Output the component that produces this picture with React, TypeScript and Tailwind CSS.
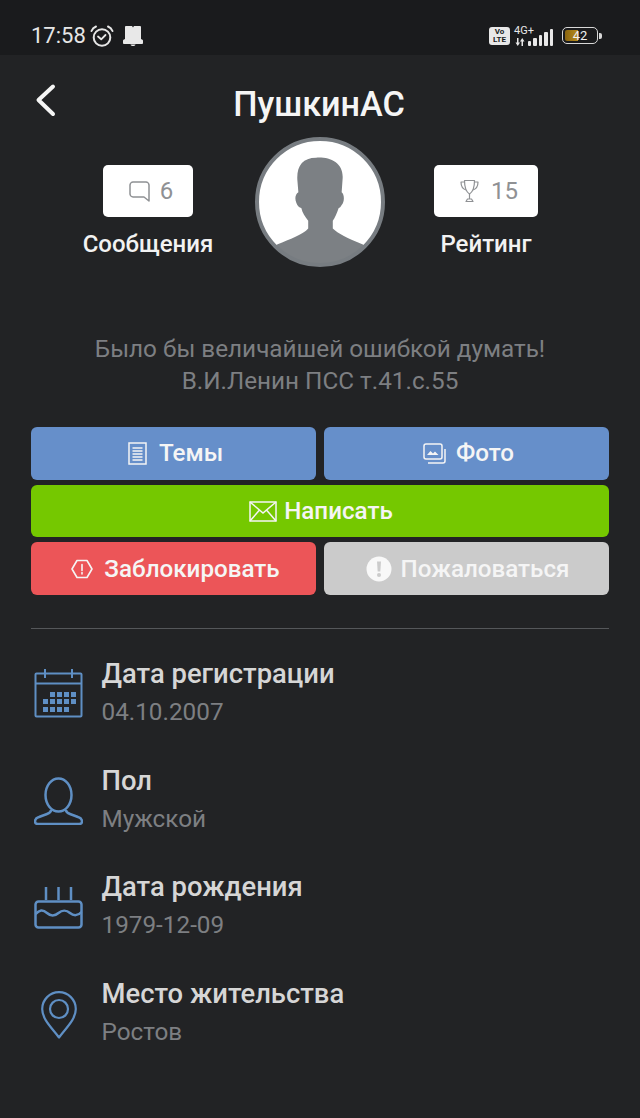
import { ReactNode } from "react"

const font = { fontFamily: "Roboto, sans-serif" }

function Alarm() {
  return (
    <svg width="24" height="22" viewBox="0 0 24 22" fill="none" stroke="#e6e6e6" strokeWidth="2" strokeLinecap="round" strokeLinejoin="round">
      <circle cx="12" cy="12.500" r="8.300" />
      <path d="M8 11.500l3.200 2.800 4.300-4.300" strokeWidth="1.800" />
      <path d="M1.500 6c.8-2 2-3.500 4.500-4.500M22.500 6c-.8-2-2-3.500-4.500-4.500" />
    </svg>
  )
}

function BellOff() {
  return (
    <svg width="20" height="20" viewBox="0 0 20 20" fill="#e8e8e8">
      <path d="M3 0h6l1 1.500L11 0h6c.5 0 1 .5 1 1v12l1.500.800c.3.200.5.500.5.900V17c0 .5-.5 1-1 1H1c-.5 0-1-.5-1-1v-2.300c0-.4.200-.7.500-.9L2 13V1c0-.5.500-1 1-1z" />
      <path d="M7.500 18.500h5c-.3 1-1.300 1.500-2.500 1.500s-2.200-.5-2.500-1.500z" />
    </svg>
  )
}

function Signal() {
  const bars = [5, 8, 11, 14, 17]
  return (
    <div className="flex items-end gap-[2px]">
      {bars.map((h, i) => (
        <div key={i} className="w-[3.500px] bg-[#e8e8e8] rounded-[1px]" style={{ height: h }} />
      ))}
    </div>
  )
}

function StatusBar() {
  return (
    <div className="h-[55px] bg-[#1a1b1d] flex items-center justify-between pl-[31px] pr-[38px] pt-[16px]">
      <div className="flex items-center">
        <span className="text-[22px] leading-[26px] text-[#e6e6e6]">17:58</span>
        <div className="ml-[4px]"><Alarm /></div>
        <div className="ml-[9px]"><BellOff /></div>
      </div>
      <div className="flex items-center">
        <div className="w-[21px] h-[18px] bg-[#e8e8e8] rounded-[3px] flex flex-col items-center justify-center text-[#1a1b1d] text-[8px] leading-[8px] font-bold">
          <span>Vo</span>
          <span>LTE</span>
        </div>
        <div className="ml-[4px] relative w-[39px] h-[20px] flex items-end justify-end">
          <span className="absolute left-0 -top-[1px] text-[11px] leading-[11px] text-[#e8e8e8]">4G+</span>
          <svg className="absolute left-[1px] bottom-0" width="10" height="8" viewBox="0 0 10 8" fill="#e8e8e8">
            <path d="M2 0h1.500v4.500H5L2.750 8 .5 4.500H2zM6.500 8H8V3.500h1.500L7.250 0 5 3.500h1.500z" />
          </svg>
          <Signal />
        </div>
        <div className="ml-[9px] w-[36px] h-[17px] border border-[#d8d8d8] rounded-[5px] p-[2px] relative">
          <div className="w-[13px] h-full bg-gradient-to-r from-[#8a6510] to-[#b98d1c] rounded-l-[2px]" />
          <span className="absolute inset-0 flex items-center justify-center text-[13px] leading-none text-[#f0f0f0]">42</span>
        </div>
        <div className="w-[3px] h-[6px] bg-[#d8d8d8] rounded-r-[2px] ml-[1px]" />
      </div>
    </div>
  )
}

function Avatar() {
  return (
    <svg className="shrink-0" width="130" height="130" viewBox="0 0 130 130">
      <defs>
        <clipPath id="avatar-clip">
          <circle cx="65" cy="65" r="63" />
        </clipPath>
      </defs>
      <circle cx="65" cy="65" r="63" fill="#fff" />
      <g clipPath="url(#avatar-clip)">
        <path
          transform="translate(4 4) scale(.984)"
          fill="#7c8084"
          d="M39 40C38 26 44 17 58 17c14-1 28 5 27 21l-1 14c3 2 3 10 0 13-1 2-2 3-3 3-2 6-4 10-6 13v8c5 5 15 10 30 16l4 2 15 17v10H0v-10l15-17 4-2c12-5 26-10 31-16v-8c-3-4-6-8-7-13-2 0-4-2-5-5-2-5-1-9 2-11z"
        />
      </g>
      <circle cx="65" cy="65" r="63" fill="none" stroke="#777c81" strokeWidth="4" />
    </svg>
  )
}

function Stat({ icon, value, label, box }: { icon: ReactNode; value: string; label: string; box: string }) {
  return (
    <div className="flex flex-col items-center">
      <div className={`${box} h-[52px] bg-white rounded-[5px] flex items-center justify-center text-[#8f9194] text-[24px]`}>
        {icon}
        <span>{value}</span>
      </div>
      <span className="mt-[12px] text-[24px] leading-[30px] font-medium text-[#f2f2f2]">{label}</span>
    </div>
  )
}

function Btn({ bg, icon, text, extra }: { bg: string; icon: ReactNode; text: string; extra: string }) {
  return (
    <div className={`${bg} ${extra} rounded-[6px] flex items-center justify-center text-[24.200px] font-medium text-[#f5f5f5]`}>
      {icon}
      <span>{text}</span>
    </div>
  )
}

function InfoRow({ icon, title, value }: { icon: ReactNode; title: string; value: string }) {
  return (
    <div className="h-[76px] flex items-center">
      <div className="w-[70.500px] pl-[3px] flex justify-start shrink-0">{icon}</div>
      <div className="flex flex-col">
        <span className="text-[27.400px] leading-[38px] font-medium text-[#d6d6d6]">{title}</span>
        <span className="text-[24.300px] leading-[38px] text-[#7d7f82]">{value}</span>
      </div>
    </div>
  )
}

const blue = "#5f8fc4"

const calDots = [
  [16, 23], [23, 23], [30, 23], [37, 23],
  [9, 30], [16, 30], [23, 30], [30, 30], [37, 30],
  [9, 38], [16, 38], [23, 38], [30, 38],
]

export default function App() {
  return (
    <div className="w-[640px] h-[1118px] bg-[#222325] overflow-hidden" style={font}>
      <StatusBar />

      <div className="relative h-[82px] flex items-center justify-center">
        <svg className="absolute left-[33px] top-[27px]" width="26" height="36" viewBox="0 0 26 36" fill="none" stroke="#f5f5f5" strokeWidth="4" strokeLinecap="round" strokeLinejoin="round">
          <path d="M20 4.500 5.500 18 20 32" />
        </svg>
        <span className="text-[34.200px] leading-[40px] font-medium text-[#f5f5f5] mt-[15px] mr-[2px]">ПушкинАС</span>
      </div>

      <div className="flex items-start pl-[83px]">
        <div className="w-[130px] pt-[28px]">
          <Stat
            box="w-[90px] pl-[5px] gap-[9px]"
            value="6"
            label="Сообщения"
            icon={
              <svg width="23" height="23" viewBox="0 0 23 23" fill="none" stroke="#8f9194" strokeWidth="1.500" strokeLinejoin="round">
                <path d="M5 2h13c1.500 0 3 1.500 3 3v16l-5-4H5c-1.500 0-3-1.500-3-3V5c0-1.500 1.500-3 3-3z" />
              </svg>
            }
          />
        </div>
        <div className="ml-[42px]"><Avatar /></div>
        <div className="ml-[49px] w-[104px] pt-[28px]">
          <Stat
            box="w-[104px] pl-[6px] gap-[12px]"
            value="15"
            label="Рейтинг"
            icon={
              <svg width="19" height="24" viewBox="0 0 19 24" fill="none" stroke="#8f9194" strokeWidth="1.200" strokeLinejoin="round">
                <path d="M4.500 1.500h10c0 6-1 11-5 13.500-4-2.500-5-7.500-5-13.500z" />
                <path d="M4.500 3H1c0 4 2 7 5 8M14.500 3H18c0 4-2 7-5 8" />
                <path d="M9.500 15v5M6 22.500h7L11.500 20h-4z" />
              </svg>
            }
          />
        </div>
      </div>

      <div className="mt-[66px] flex flex-col items-center text-[24.300px] leading-[32px] text-[#7d7f82]">
        <span>Было бы величайшей ошибкой думать!</span>
        <span>В.И.Ленин ПСС т.41.с.55</span>
      </div>

      <div className="mx-[31px] mt-[30px] flex flex-col gap-[5px]">
        <div className="grid grid-cols-2 gap-[8px]">
          <Btn
            bg="bg-[#668fca]"
            extra="h-[53px] pl-[4px] gap-[12px]"
            text="Темы"
            icon={
              <svg width="19" height="23" viewBox="0 0 19 23" fill="none" stroke="#f5f5f5" strokeWidth="1.500">
                <rect x="1" y="1" width="17" height="21" />
                <path d="M4.500 6h10M4.500 9h10M4.500 12h10M4.500 15h10M4.500 18h10" />
              </svg>
            }
          />
          <Btn
            bg="bg-[#668fca]"
            extra="h-[53px] pl-[4px] gap-[10px]"
            text="Фото"
            icon={
              <svg width="23" height="21" viewBox="0 0 23 21" fill="none" stroke="#f5f5f5" strokeWidth="1.500">
                <rect x="1" y="1" width="18" height="15" rx="2" />
                <path d="M22 6v12c0 1-1 2-2 2H5" />
                <path d="M4 12l3.500-4 2.500 2.500 2-2 3.500 3.500z" fill="#f5f5f5" stroke="none" />
              </svg>
            }
          />
        </div>
        <Btn
          bg="bg-[#75c800]"
          extra="h-[52px] pl-[2px] pt-[1px] gap-[7px]"
          text="Написать"
          icon={
            <svg width="28" height="21" viewBox="0 0 28 21" fill="none" stroke="#f5f5f5" strokeWidth="1.500">
              <rect x="1" y="1" width="26" height="19" />
              <path d="M1 1l13 11L27 1M1 20l9.500-11M27 20 17.500 9" />
            </svg>
          }
        />
        <div className="grid grid-cols-2 gap-[8px]">
          <Btn
            bg="bg-[#ec5558]"
            extra="h-[53px] pl-[4px] pt-[1px] gap-[11px]"
            text="Заблокировать"
            icon={
              <svg width="22" height="20" viewBox="0 0 22 20" fill="none" stroke="#f5f5f5" strokeWidth="1.600" strokeLinejoin="round">
                <path d="M6 1.500h10L21 10l-5 8.500H6L1 10z" />
                <path d="M11 5.500v6M11 13.500v1.500" strokeLinecap="round" />
              </svg>
            }
          />
          <Btn
            bg="bg-[#cbcbcb]"
            extra="h-[53px] pl-[2px] pt-[1px] gap-[9px]"
            text="Пожаловаться"
            icon={
              <svg width="26" height="26" viewBox="0 0 26 26">
                <circle cx="13" cy="13" r="12.500" fill="#f8f8f8" />
                <path d="M11 5.500h4l-.7 10h-2.600z" fill="#cbcbcb" />
                <circle cx="13" cy="19" r="2" fill="#cbcbcb" />
              </svg>
            }
          />
        </div>
      </div>

      <div className="mx-[31px] mt-[33px] h-px bg-[#55575a]" />

      <div className="mx-[31px] mt-[26px] flex flex-col gap-[30.700px]">
        <InfoRow
          title="Дата регистрации"
          value="04.10.2007"
          icon={
            <svg width="49" height="49" viewBox="0 0 49 49" fill="none" stroke={blue} strokeWidth="2">
              <rect x="1.500" y="4.500" width="46" height="43" rx="1" />
              <path d="M1.500 14.500h46M11 0v9M38 0v9" />
              {calDots.map(([x, y]) => (
                <rect key={`${x}-${y}`} x={x} y={y} width="5" height="5" fill={blue} stroke="none" />
              ))}
            </svg>
          }
        />
        <InfoRow
          title="Пол"
          value="Мужской"
          icon={
            <svg className="mt-[3px]" width="49" height="48" viewBox="0 0 49 48" fill="none" stroke={blue} strokeWidth="2.500">
              <ellipse cx="24.500" cy="18" rx="13" ry="16.500" />
              <path d="M17 33c0 2-1 3-4 4l-8 3c-3 1-4 3-4 4.500 0 2 1 2.500 3 2.500h41c2 0 3-.5 3-2.500 0-1.500-1-3.500-4-4.500l-8-3c-3-1-4-2-4-4" />
            </svg>
          }
        />
        <InfoRow
          title="Дата рождения"
          value="1979-12-09"
          icon={
            <svg className="mt-[4px]" width="49" height="42" viewBox="0 0 49 42" fill="none" stroke={blue} strokeWidth="2.500">
              <path d="M12 0v13M24.500 0v13M37 0v13" />
              <rect x="1.500" y="14.500" width="46" height="26" rx="3" />
              <path d="M1.500 27c4-4 7-5 11.500-1s8 3 11.500 0 8-3 11.500 0 8 3 11.500-1" />
            </svg>
          }
        />
        <InfoRow
          title="Место жительства"
          value="Ростов"
          icon={
            <div className="pl-[7px] mt-[4px]">
              <svg width="36" height="48" viewBox="0 0 36 48" fill="none" stroke={blue} strokeWidth="2.200" strokeLinejoin="round">
                <path d="M18 46.500C10 36 1.200 28 1.200 18a16.800 16.800 0 0 1 33.600 0C34.800 28 26 36 18 46.500z" />
                <circle cx="18" cy="18" r="9" />
              </svg>
            </div>
          }
        />
      </div>
    </div>
  )
}
